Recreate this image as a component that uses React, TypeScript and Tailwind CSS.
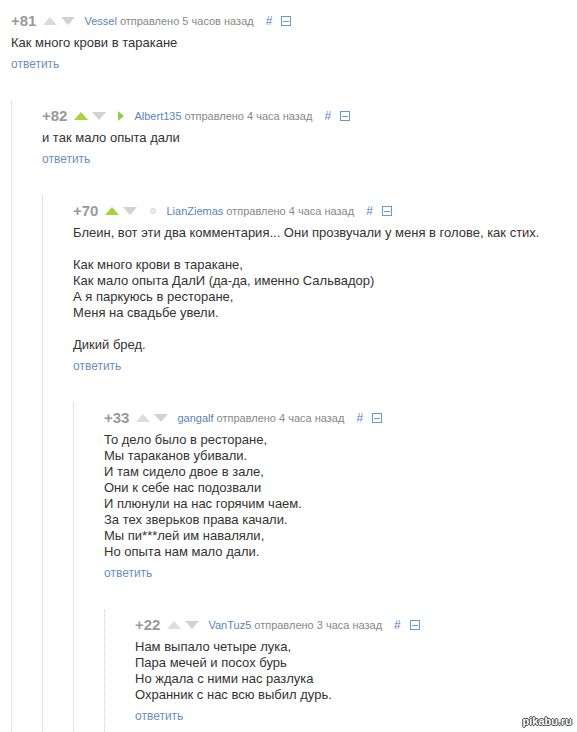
import React from "react";

type Comment = {
  rating: string;
  up?: boolean;
  marker?: "play" | "dot";
  user: string;
  time: string;
  text: string;
  children?: Comment[];
};

const data: Comment = {
  rating: "+81",
  user: "Vessel",
  time: "отправлено 5 часов назад",
  text: "Как много крови в таракане",
  children: [
    {
      rating: "+82",
      up: true,
      marker: "play",
      user: "Albert135",
      time: "отправлено 4 часа назад",
      text: "и так мало опыта дали",
      children: [
        {
          rating: "+70",
          up: true,
          marker: "dot",
          user: "LianZiemas",
          time: "отправлено 4 часа назад",
          text:
            "Блеин, вот эти два комментария... Они прозвучали у меня в голове, как стих.\n\nКак много крови в таракане,\nКак мало опыта ДалИ (да-да, именно Сальвадор)\nА я паркуюсь в ресторане,\nМеня на свадьбе увели.\n\nДикий бред.",
          children: [
            {
              rating: "+33",
              user: "gangalf",
              time: "отправлено 4 часа назад",
              text:
                "То дело было в ресторане,\nМы тараканов убивали.\nИ там сидело двое в зале,\nОни к себе нас подозвали\nИ плюнули на нас горячим чаем.\nЗа тех зверьков права качали.\nМы пи***лей им наваляли,\nНо опыта нам мало дали.",
              children: [
                {
                  rating: "+22",
                  user: "VanTuz5",
                  time: "отправлено 3 часа назад",
                  text:
                    "Нам выпало четыре лука,\nПара мечей и посох бурь\nНо ждала с ними нас разлука\nОхранник с нас всю выбил дурь.",
                },
              ],
            },
          ],
        },
      ],
    },
  ],
};

function Up({ green }: { green?: boolean }) {
  return (
    <svg width="14" height="8" viewBox="0 0 14 8" className="block">
      <polygon points="0,8 7,0 14,8" fill={green ? "#a3d43a" : "#dcdcdc"} />
    </svg>
  );
}

function Down() {
  return (
    <svg width="14" height="8" viewBox="0 0 14 8" className="block">
      <polygon points="0,0 14,0 7,8" fill="#d2d2d2" />
    </svg>
  );
}

function Header({ c }: { c: Comment }) {
  return (
    <div className="flex h-[16px] items-center">
      <span className="text-[15px] font-bold leading-[16px] text-[#9a9a9a]">{c.rating}</span>
      <span className="ml-[7px]">
        <Up green={c.up} />
      </span>
      <span className="ml-[4px]">
        <Down />
      </span>
      {c.marker === "play" && (
        <svg width="6" height="10" viewBox="0 0 6 10" className="ml-[12px] block">
          <polygon points="0,0 6,5 0,10" fill="#8fd13a" />
        </svg>
      )}
      {c.marker === "dot" && (
        <span className="ml-[13px] block h-[6px] w-[6px] rounded-full border border-[#d8d8d8] bg-[#eeeeee]" />
      )}
      <span
        className={
          (c.marker ? "ml-[10px] " : "ml-[9px] ") +
          "text-[11px] leading-[16px] text-[#5a84b8]"
        }
      >
        {c.user}
      </span>
      <span className="ml-[3px] text-[11px] leading-[16px] text-[#888888]">{c.time}</span>
      <span className="ml-[12px] text-[12px] leading-[16px] text-[#5a84b8]">#</span>
      <span className="ml-[9px] flex h-[10px] w-[10px] items-center justify-center border border-[#6a9ac8]">
        <span className="block h-[1px] w-[6px] bg-[#6a9ac8]" />
      </span>
    </div>
  );
}

function CommentView({ c }: { c: Comment }) {
  return (
    <div>
      <Header c={c} />
      <div className="mt-[6px] whitespace-pre-line text-[13px] leading-[16px] text-[#333333]">
        {c.text}
      </div>
      <div className="mt-[5px] text-[12px] leading-[16px] text-[#6a8fbd]">ответить</div>
      {c.children && (
        <div className="mt-[29px] border-l border-dotted border-[#cfcfcf] pb-[60px] pl-[30px] pt-[7px]">
          {c.children.map((ch, i) => (
            <CommentView key={i} c={ch} />
          ))}
        </div>
      )}
    </div>
  );
}

export default function App() {
  return (
    <div className="relative h-[732px] w-[577px] overflow-hidden bg-white pl-[11px] pt-[13px] font-['Liberation_Sans',Arial,sans-serif]">
      <CommentView c={data} />
      <div className="absolute bottom-[5px] right-[5px] text-[11px] font-bold leading-[12px] text-white [text-shadow:-1px_0_#444,1px_0_#444,0_1px_#444,0_-1px_#444]">
        pikabu.ru
      </div>
    </div>
  );
}
